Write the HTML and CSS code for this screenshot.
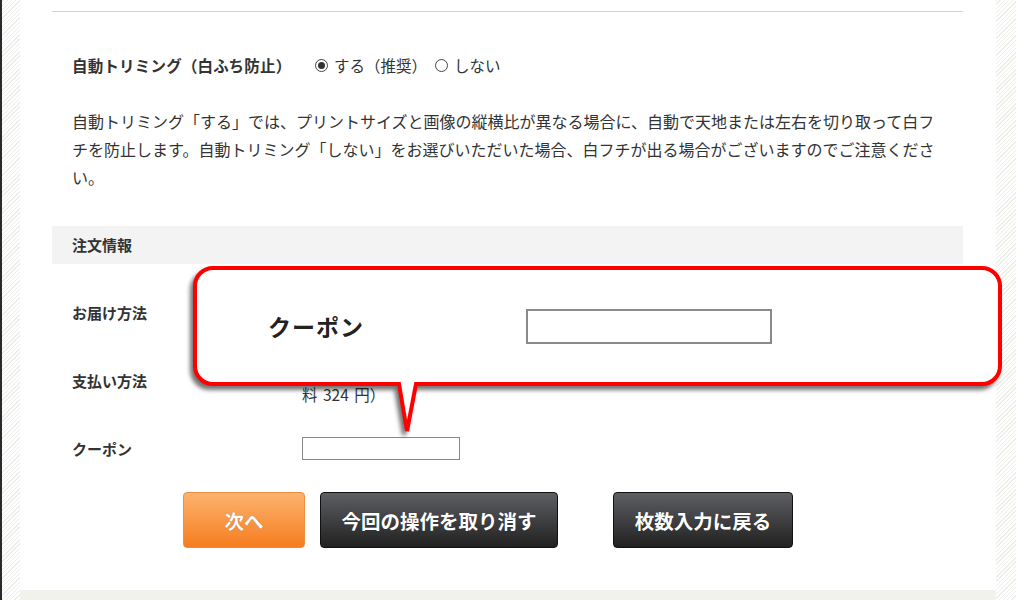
FILE: index.html
```html
<!DOCTYPE html>
<html lang="ja">
<head>
<meta charset="utf-8">
<title>注文情報</title>
<link rel="stylesheet" href="styles.css">
</head>
<body>
<div class="page">
  <main class="main">
    <div class="content">
      <hr class="rule">
      <div class="trim-row">
        <span class="trim-label">自動トリミング（白ふち防止）</span>
        <span class="radio checked"></span><span class="radio-text">する（推奨）</span>
        <span class="radio"></span><span class="radio-text">しない</span>
      </div>
      <p class="note">自動トリミング「する」では、プリントサイズと画像の縦横比が異なる場合に、自動で天地または左右を切り取って白フチを防止します。自動トリミング「しない」をお選びいただいた場合、白フチが出る場合がございますのでご注意ください。</p>

      <div class="section-head">注文情報</div>
      <div class="form-grid">
        <div class="label">お届け方法</div>
        <div class="value"></div>
        <div class="label">支払い方法</div>
        <div class="value">代金引換（代引き手数<br>料 324 円）</div>
        <div class="label">クーポン</div>
        <div class="value"><input class="coupon" type="text"></div>
      </div>

      <div class="buttons">
        <button class="btn btn-next">次へ</button>
        <button class="btn btn-dark btn-cancel">今回の操作を取り消す</button>
        <button class="btn btn-dark btn-back">枚数入力に戻る</button>
      </div>

      <div class="callout">
        <svg class="callout-shape" width="812" height="176" viewBox="0 0 812 176">
          <path d="M22,2 H791 A18,18 0 0 1 809,20 V100 A18,18 0 0 1 791,118 H225 L216,165 L208,118 H22 A18,18 0 0 1 4,100 V20 A18,18 0 0 1 22,2 Z" fill="#fff" stroke="#ff0000" stroke-width="4" stroke-linejoin="miter"/>
        </svg>
        <div class="callout-body">
          <span class="callout-label">クーポン</span>
          <span class="callout-input"></span>
        </div>
      </div>
    </div>
    <footer class="foot"></footer>
  </main>
</div>
</body>
</html>
```
FILE: styles.css
```css
html, body {
  margin: 0;
  padding: 0;
}
body {
  width: 1016px;
  height: 600px;
  overflow: hidden;
  border-left: 2px solid #2a2a2a;
  box-sizing: border-box;
  background: repeating-linear-gradient(135deg, #ffffff 0 2px, #eeeee8 2px 3px);
  font-family: "Noto Sans CJK JP", "Noto Sans", sans-serif;
  color: #333;
}
.page {
  display: flex;
  height: 600px;
}
.main {
  margin-left: 18px;
  width: 976px;
  background: #fff;
  display: flex;
  flex-direction: column;
}
.content {
  position: relative;
  height: 590px;
  padding: 11px 32px 0 32px;
  box-sizing: border-box;
}
.foot {
  height: 10px;
  background: #f2f2ed;
}
.rule {
  margin: 0;
  border: 0;
  border-top: 1px solid #d2d2d2;
  width: 911px;
}
.trim-row {
  display: flex;
  align-items: center;
  margin-top: 41px;
  padding-left: 20px;
  height: 24px;
  font-size: 15.5px;
}
.trim-label {
  font-weight: bold;
  width: 243px;
  letter-spacing: 0.2px;
}
.radio {
  width: 11px;
  height: 11px;
  border: 1px solid #444;
  border-radius: 50%;
  position: relative;
  margin-right: 6px;
}
.radio.checked::after {
  content: "";
  position: absolute;
  left: 2px;
  top: 2px;
  width: 7px;
  height: 7px;
  border-radius: 50%;
  background: #333;
}
.radio-text {
  margin-right: 8px;
}
.note {
  margin: 30px 0 0 0;
  padding: 0 20px;
  font-size: 16px;
  line-height: 28px;
}
.section-head {
  margin-top: 35px;
  height: 38px;
  line-height: 38px;
  background: #f3f3f3;
  padding-left: 20px;
  font-size: 15px;
  font-weight: bold;
  width: 891px;
}
.form-grid {
  display: grid;
  grid-template-columns: 230px 1fr;
  grid-auto-rows: 68px;
  align-items: center;
  margin-top: 14px;
  padding-left: 20px;
}
.label {
  font-size: 15px;
  font-weight: bold;
}
.value {
  font-size: 15.5px;
  line-height: 28px;
  word-spacing: 2px;
}
.coupon {
  display: block;
  width: 158px;
  height: 23px;
  box-sizing: border-box;
  border: 1px solid #888;
  margin: 0;
  padding: 0 4px;
}
.buttons {
  display: flex;
  margin-top: 10px;
  padding-left: 131px;
}
.btn {
  height: 56px;
  box-sizing: border-box;
  border-radius: 4px;
  font-family: "Noto Sans CJK JP", sans-serif;
  font-size: 19.5px;
  font-weight: bold;
  color: #fff;
  padding: 0;
  text-shadow: 0 0 1px rgba(0,0,0,0.35);
}
.btn-next {
  width: 122px;
  background: linear-gradient(#fdb36f, #f57d1f);
  border: 1px solid #f08c3e;
}
.btn-dark {
  background: linear-gradient(#5e5f64, #212121);
  border: 1px solid #111;
}
.btn-cancel {
  width: 238px;
  margin-left: 15px;
}
.btn-back {
  width: 180px;
  margin-left: 55px;
}
.callout {
  position: absolute;
  left: 171px;
  top: 266px;
  width: 812px;
  height: 176px;
}
.callout-shape {
  position: absolute;
  left: 0;
  top: 0;
  filter: drop-shadow(-3px 4px 2px rgba(0,0,0,0.55));
}
.callout-body {
  position: relative;
  display: flex;
  align-items: center;
  height: 120px;
  padding-left: 77px;
}
.callout-label {
  font-size: 23px;
  font-weight: bold;
  color: #222;
  width: 258px;
  letter-spacing: 1px;
}
.callout-input {
  width: 246px;
  height: 35px;
  box-sizing: border-box;
  border: 2px solid #8a8a8a;
  background: #fff;
}
```
